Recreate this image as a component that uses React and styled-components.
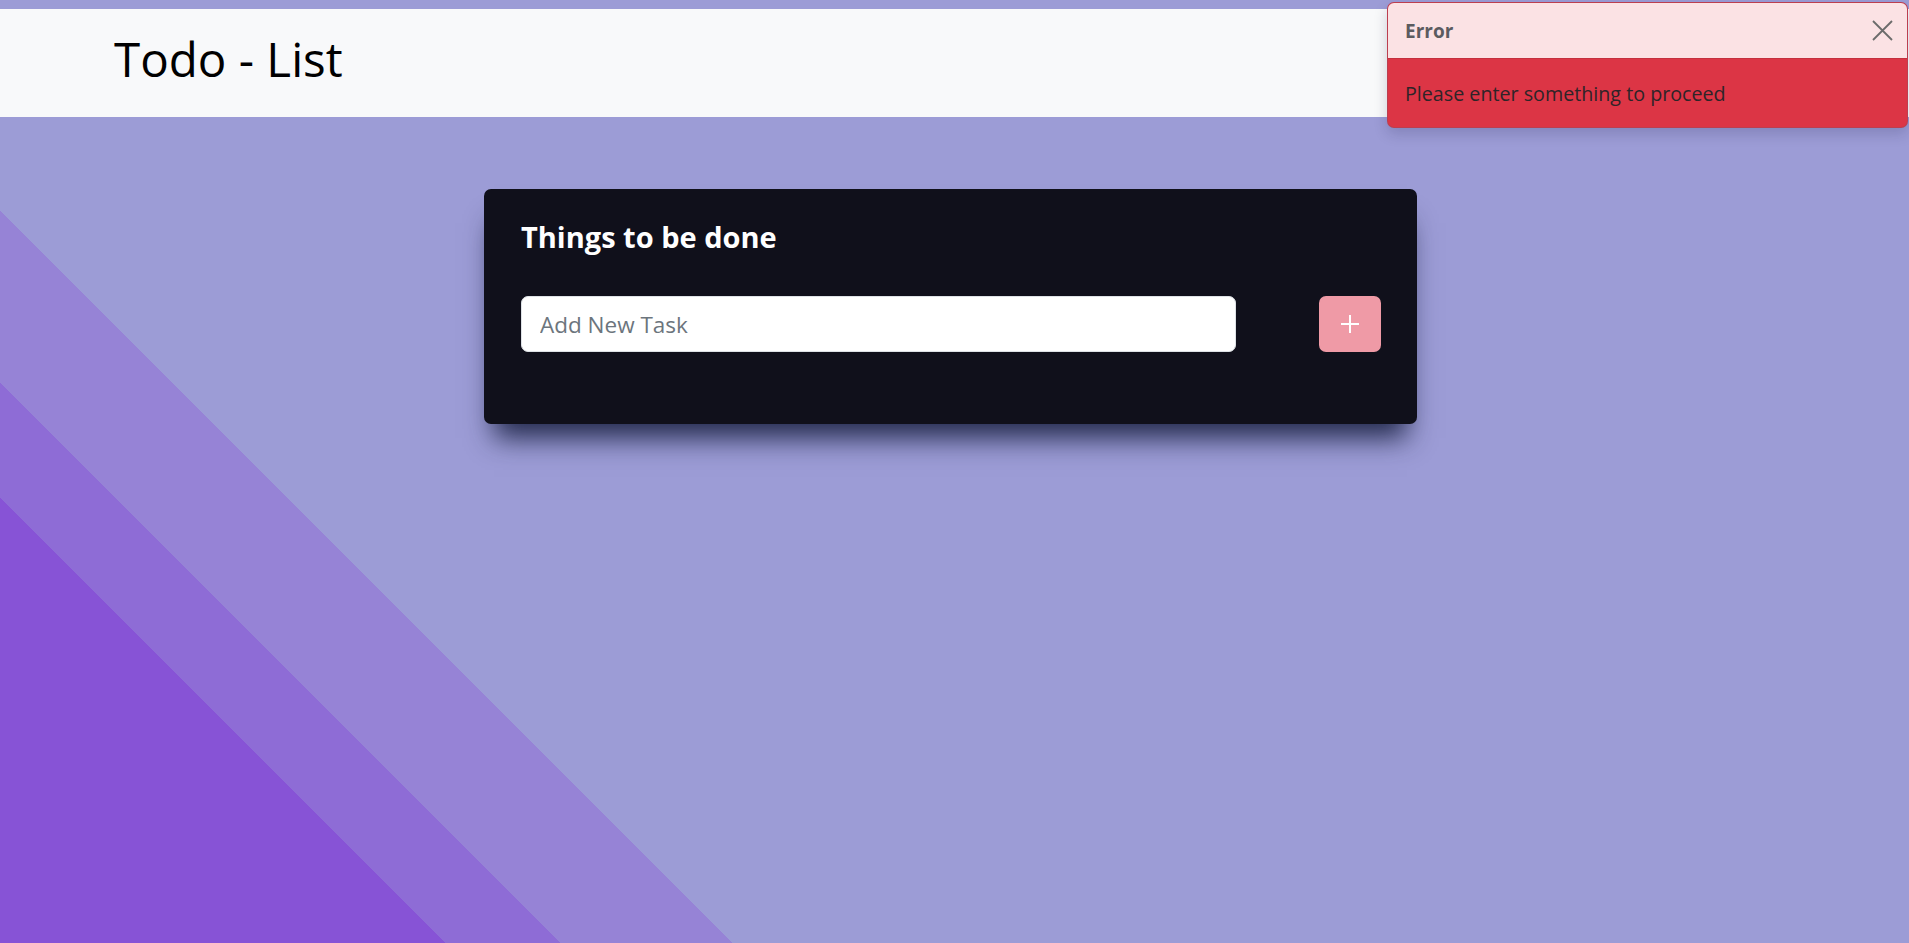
import React from "react";
import styled, { createGlobalStyle } from "styled-components";

const GlobalStyle = createGlobalStyle`
  html, body {
    margin: 0;
    padding: 0;
  }
  body {
    font-family: "Open Sans", "Noto Sans", sans-serif;
  }
  * { box-sizing: border-box; }
`;

const Page = styled.div`
  position: relative;
  height: 100vh;
  overflow: hidden;
  padding-top: 9px;
  background: linear-gradient(
    45deg,
    #8753d6 0px,
    #8753d6 315px,
    #8e6cd6 315px,
    #8e6cd6 396px,
    #9683d6 396px,
    #9683d6 518px,
    #9c9cd6 518px
  );
`;

const Header = styled.header`
  height: 108px;
  background: #f8f9fa;
  display: flex;
  align-items: center;
  padding: 0 0 10px 114px;
`;

const Brand = styled.h1`
  margin: 0;
  font-family: "Open Sans", sans-serif;
  font-weight: 400;
  font-size: 47.5px;
  color: #000;
  line-height: 1.2;
`;

const Main = styled.main`
  display: flex;
  justify-content: center;
  padding: 72px 8px 0 0;
`;

const Card = styled.section`
  width: 933px;
  background: #10101b;
  border-radius: 7px;
  padding: 31px 36px 72px 37px;
  box-shadow: 0 24px 26px -10px rgba(22, 30, 62, 0.9);
`;

const CardTitle = styled.h2`
  margin: 0;
  color: #fff;
  font-weight: 700;
  font-size: 29px;
  line-height: 34px;
`;

const Row = styled.div`
  display: flex;
  align-items: center;
  margin-top: 42px;
`;

const TaskInput = styled.input`
  width: 715px;
  height: 56px;
  border: 1px solid #dee2e6;
  border-radius: 7px;
  background: #fff;
  padding: 0 18px;
  font-family: "Open Sans", sans-serif;
  font-size: 22.5px;
  color: #212529;
  outline: none;
  &::placeholder {
    color: #6c757d;
  }
`;

const AddButton = styled.button`
  margin-left: auto;
  width: 62px;
  height: 56px;
  border: none;
  border-radius: 7px;
  background: #ef9aa6;
  display: flex;
  align-items: center;
  justify-content: center;
  padding: 0;
  cursor: pointer;
`;

const Toast = styled.div`
  position: absolute;
  top: 2px;
  right: 1px;
  width: 521px;
  border-radius: 7px;
  overflow: hidden;
  border: 1px solid rgba(90, 90, 110, 0.25);
  background: #dc3545;
  box-shadow: 0 6px 14px rgba(20, 20, 60, 0.18);
`;

const ToastHeader = styled.div`
  height: 56px;
  display: flex;
  align-items: center;
  justify-content: space-between;
  background: #fbe2e4;
  border-bottom: 1px solid #c4303d;
  padding: 0 10px 0 17px;
`;

const ToastTitle = styled.strong`
  font-size: 19px;
  font-weight: 700;
  color: #5b5b5f;
`;

const CloseButton = styled.button`
  width: 30px;
  height: 30px;
  border: none;
  background: transparent;
  display: flex;
  align-items: center;
  justify-content: center;
  padding: 0;
  cursor: pointer;
`;

const ToastBody = styled.div`
  height: 68px;
  display: flex;
  align-items: center;
  padding: 0 17px 0;
  font-size: 19.7px;
  color: #2e2428;
`;

export default function App() {
  return (
    <>
      <GlobalStyle />
      <Page>
        <Header>
          <Brand>Todo - List</Brand>
        </Header>
        <Main>
          <Card>
            <CardTitle>Things to be done</CardTitle>
            <Row>
              <TaskInput placeholder="Add New Task" />
              <AddButton aria-label="Add">
                <svg width="20" height="20" viewBox="0 0 20 20">
                  <path d="M10 1v18M1 10h18" stroke="#fff" strokeWidth="2" />
                </svg>
              </AddButton>
            </Row>
          </Card>
        </Main>
        <Toast role="alert">
          <ToastHeader>
            <ToastTitle>Error</ToastTitle>
            <CloseButton aria-label="Close">
              <svg width="21" height="21" viewBox="0 0 21 21">
                <path d="M1 1l19 19M20 1L1 20" stroke="#6b6b6b" strokeWidth="1.8" />
              </svg>
            </CloseButton>
          </ToastHeader>
          <ToastBody>Please enter something to proceed</ToastBody>
        </Toast>
      </Page>
    </>
  );
}
